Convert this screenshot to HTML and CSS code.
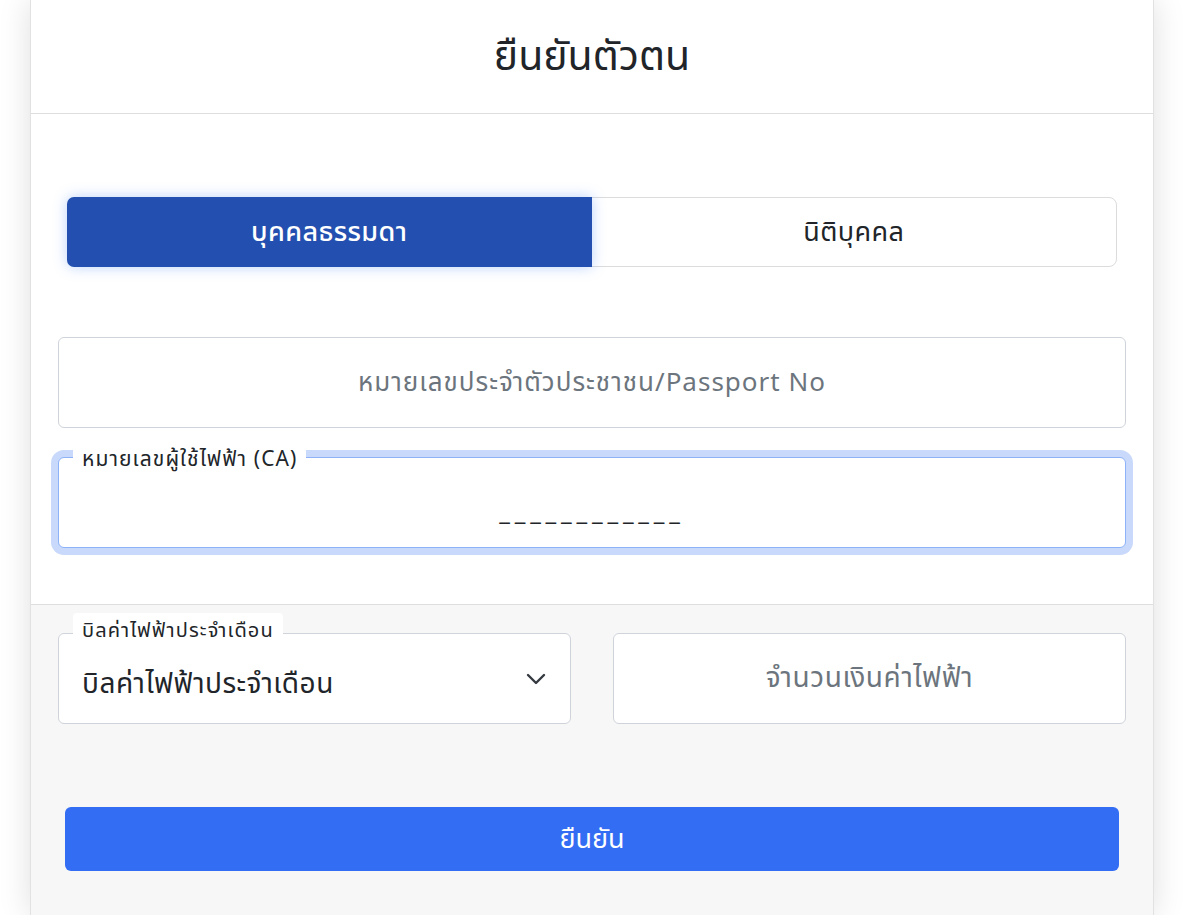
FILE: index.html
```html
<!DOCTYPE html>
<html lang="th">
<head>
    <meta charset="UTF-8">
    <meta name="viewport" content="width=device-width, initial-scale=1.0">
    <title>ยืนยันตัวตน</title>
    <link rel="stylesheet" href="styles.css">
</head>
<body>
    <div class="card">
        <div class="card-header">
            <h1>ยืนยันตัวตน</h1>
        </div>

        <div class="card-body">
            <!-- Customer type -->
            <div class="type-toggle">
                <button class="type-btn active">บุคคลธรรมดา</button>
                <button class="type-btn">นิติบุคคล</button>
            </div>

            <div class="field">
                <input class="form-input" type="text" placeholder="หมายเลขประจำตัวประชาชน/Passport No">
            </div>

            <div class="field">
                <label class="float-label">หมายเลขผู้ใช้ไฟฟ้า (CA)</label>
                <input class="form-input has-label focused" type="text" value="____________">
            </div>
        </div>

        <div class="card-footer">
            <div class="bill-row">
                <div class="field">
                    <label class="float-label">บิลค่าไฟฟ้าประจำเดือน</label>
                    <div class="form-select">
                        <span>บิลค่าไฟฟ้าประจำเดือน</span>
                        <svg class="chevron" width="20" height="12" viewBox="0 0 20 12">
                            <path d="M2 2 L10 10 L18 2" fill="none" stroke="#343a40" stroke-width="2.4" stroke-linecap="round" stroke-linejoin="round"/>
                        </svg>
                    </div>
                </div>
                <div class="field">
                    <input class="form-input amount" type="text" placeholder="จำนวนเงินค่าไฟฟ้า">
                </div>
            </div>

            <button class="submit-btn">ยืนยัน</button>
        </div>
    </div>
</body>
</html>
```

FILE: styles.css
```css
body {
    margin: 0;
    background: #fff;
    font-family: "Noto Sans Thai", "Noto Sans", sans-serif;
    color: #212529;
}

.card {
    width: 1124px;
    margin-left: 30px;
    box-sizing: border-box;
    border-left: 1px solid #e2e2e2;
    border-right: 1px solid #e2e2e2;
    box-shadow: 0 0 30px rgba(0,0,0,0.13);
    background: #fff;
}

.card-header {
    height: 113px;
    display: flex;
    align-items: center;
    justify-content: center;
    border-bottom: 1px solid #dedede;
}

.card-header h1 {
    margin: 0;
    font-size: 41px;
    font-weight: 400;
    color: #212529;
}

.card-body {
    padding: 83px 27px 56px;
}

.type-toggle {
    display: flex;
    margin: 0 9px 70px;
    height: 70px;
    border: 1px solid #dcdcdc;
    border-radius: 8px;
    box-sizing: border-box;
}

.type-btn {
    flex: 1;
    border: none;
    background: transparent;
    font-family: inherit;
    font-size: 27px;
    letter-spacing: 0.4px;
    color: #212529;
    border-radius: 8px;
    cursor: pointer;
}

.type-btn.active {
    background: #2350b0;
    color: #fff;
    font-weight: 500;
    margin: -1px 0 -1px -1px;
    border-radius: 7px 0 0 7px;
    box-shadow: 0 0 14px rgba(59,130,246,0.35);
}

.field {
    position: relative;
}

.field + .field {
    margin-top: 29px;
}

.form-input {
    display: block;
    width: 100%;
    height: 91px;
    box-sizing: border-box;
    border: 1px solid #ced4da;
    border-radius: 6px;
    background: #fff;
    font-family: inherit;
    font-size: 26px;
    letter-spacing: 1px;
    color: #212529;
    text-align: center;
    outline: none;
}

.form-input::placeholder {
    color: #6c757d;
}

.form-input.amount {
    font-size: 28px;
    letter-spacing: 0.6px;
}

.form-input.has-label {
    padding-top: 22px;
    font-size: 24px;
    letter-spacing: 4.8px;
}

.form-input.focused {
    border-color: #8db2f7;
    box-shadow: 0 0 0 7px #c9d9fb;
}

.float-label {
    position: absolute;
    left: 15px;
    top: -10px;
    z-index: 2;
    padding: 0 9px;
    font-size: 21px;
    letter-spacing: 1.1px;
    line-height: 26px;
    background: #fff;
    border-radius: 4px;
    color: #212529;
}

.card-footer {
    background: #f7f7f7;
    border-top: 1px solid #dedede;
    padding: 28px 27px 45px;
}

.bill-row {
    display: flex;
    gap: 42px;
    margin-bottom: 83px;
}

.bill-row .field {
    flex: 1;
}

.bill-row .field + .field {
    margin-top: 0;
}

.form-select {
    height: 91px;
    box-sizing: border-box;
    border: 1px solid #ced4da;
    border-radius: 6px;
    background: #fff;
    display: flex;
    align-items: center;
    justify-content: space-between;
    padding: 12px 24px 0 23px;
    font-size: 28px;
    letter-spacing: 0.5px;
}

.chevron {
    margin-top: -12px;
}

.bill-row .float-label {
    top: -20px;
    padding: 5px 9px;
    font-size: 20px;
}

.submit-btn {
    display: block;
    width: 1054px;
    margin: 0 auto;
    height: 64px;
    border: none;
    border-radius: 6px;
    background: #336df4;
    color: #fff;
    font-family: inherit;
    font-size: 27px;
    cursor: pointer;
}
```
